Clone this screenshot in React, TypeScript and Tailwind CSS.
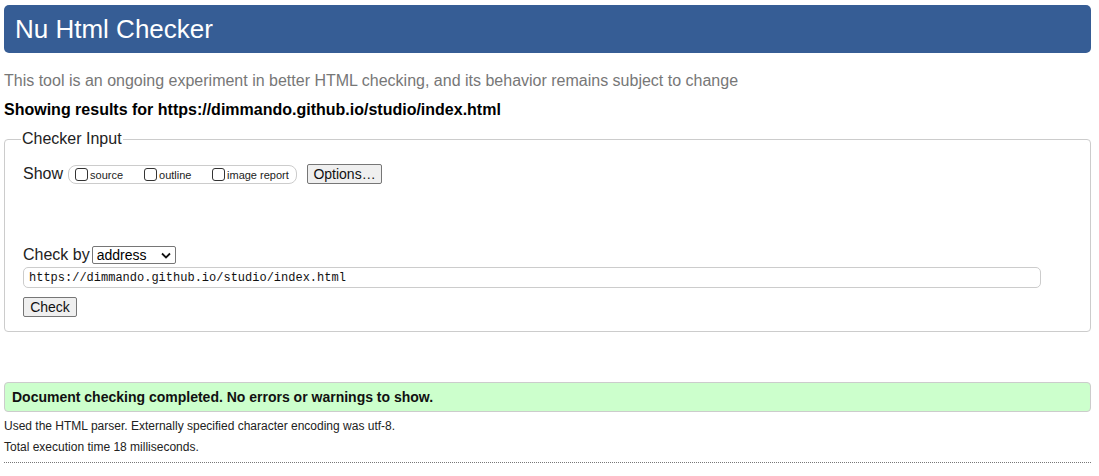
import React from "react";

const Box = ({ label }: { label: string }) => (
  <label className="flex items-center">
    <span className="w-[13px] h-[13px] border border-[#333] rounded-[3px] bg-white mr-[2px]" />
    <span className="text-[11px] text-[#222] mt-[3px]">{label}</span>
  </label>
);

export default function App() {
  return (
    <div className="min-h-screen bg-white font-['Liberation_Sans',Arial,sans-serif] text-black pt-[5px] px-[4px] w-[1095px]">
      <header className="h-[48px] rounded-[5px] bg-[#365d95] flex items-center pl-[11px]">
        <h1 className="text-[26px] text-white leading-none mt-[-1px]">Nu Html Checker</h1>
      </header>

      <p className="mt-[19px] text-[16px] leading-[18px] text-[#777]">
        This tool is an ongoing experiment in better HTML checking, and its behavior remains subject to change
      </p>
      <p className="mt-[11px] text-[16px] leading-[18px] font-bold">
        Showing results for https://dimmando.github.io/studio/index.html
      </p>

      <fieldset className="mt-[11px] border border-[#ccc] rounded-[4px] pl-[18px] pr-[49px] pb-[14px]">
        <legend className="ml-[-2px] px-[1px] text-[16px] leading-[18px] text-[#222]">Checker Input</legend>
        <div className="flex items-center h-[20px] mt-[16px]">
          <span className="text-[16px] leading-[18px] text-[#222]">Show</span>
          <div className="ml-[5px] h-[19px] w-[229px] border border-[#ccc] rounded-[8px] flex items-center pl-[6px]">
            <div className="w-[69px]"><Box label="source" /></div>
            <div className="w-[68px]"><Box label="outline" /></div>
            <Box label="image report" />
          </div>
          <button className="ml-[10px] h-[20px] w-[75px] border border-[#767676] rounded-[2px] bg-[#efefef] text-[14px] leading-none text-[#111]">
            Options…
          </button>
        </div>

        <div className="flex items-center h-[18px] mt-[62px]">
          <span className="text-[16px] leading-[18px] text-[#222]">Check by</span>
          <div className="ml-[2px] h-[18px] w-[84px] border border-[#767676] rounded-[2px] flex items-center justify-between px-[4px]">
            <span className="text-[14px] leading-none text-black">address</span>
            <svg width="10" height="7" viewBox="0 0 10 7">
              <path d="M1 1.5 L5 5.5 L9 1.5" fill="none" stroke="#111" strokeWidth="1.8" />
            </svg>
          </div>
        </div>
        <div className="mt-[3px] h-[21px] border border-[#ccc] rounded-[5px] flex items-center pl-[5px]">
          <span className="font-['Liberation_Mono','DejaVu_Sans_Mono',monospace] text-[12px] leading-none text-[#111]">
            https://dimmando.github.io/studio/index.html
          </span>
        </div>
        <button className="block mt-[9px] h-[20px] w-[54px] border border-[#767676] rounded-[2px] bg-[#efefef] text-[14px] leading-none text-[#111]">
          Check
        </button>
      </fieldset>

      <div className="mt-[50px] h-[30px] border border-[#ccc] rounded-[4px] bg-[#ccffcc] flex items-center pl-[7px]">
        <span className="text-[14px] font-bold text-[#111]">
          Document checking completed. No errors or warnings to show.
        </span>
      </div>
      <p className="mt-[7px] text-[12px] leading-[14px] text-[#222]">
        Used the HTML parser. Externally specified character encoding was utf-8.
      </p>
      <p className="mt-[7px] text-[12px] leading-[14px] text-[#222]">Total execution time 18 milliseconds.</p>
      <div className="mt-[8px] border-t border-dotted border-[#777]" />
    </div>
  );
}
